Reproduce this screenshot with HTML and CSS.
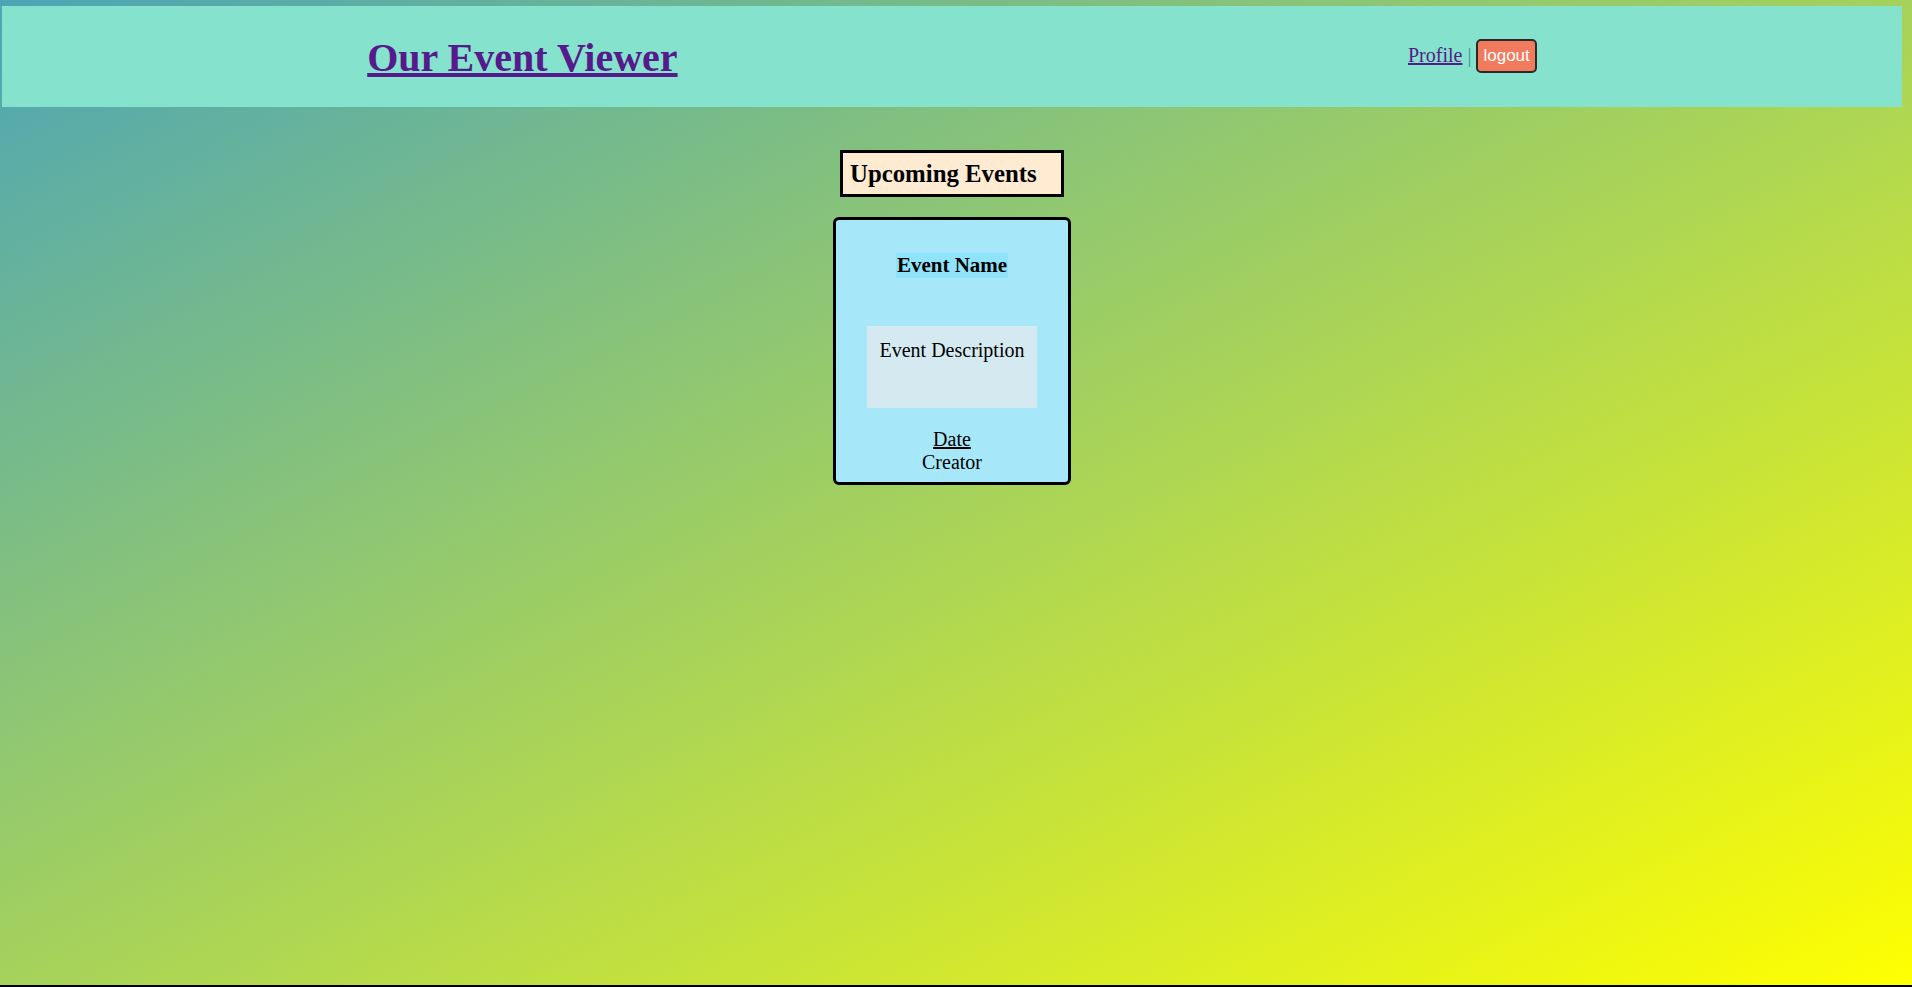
FILE: index.html
```html
<!DOCTYPE html>
<html lang="en">
<head>
<meta charset="utf-8">
<title>Our Event Viewer</title>
<link rel="stylesheet" href="styles.css">
</head>
<body>
  <header class="site-header">
    <h1 class="site-title"><a href="#" class="title-link">Our Event Viewer</a></h1>
    <nav class="user-nav"><a href="#" class="nav-link">Profile</a> <span class="sep">|</span> <button class="logout-btn">logout</button></nav>
  </header>
  <main class="content">
    <h2 class="section-title">Upcoming Events</h2>
    <div class="event-card">
      <h3 class="event-name">Event Name</h3>
      <p class="event-desc">Event Description</p>
      <div class="event-meta">
        <a href="#" class="event-date">Date</a>
        <div class="event-creator">Creator</div>
      </div>
    </div>
  </main>
</body>
</html>
```

FILE: styles.css
```css
html {
  background: #000;
}
body {
  margin: 0;
  height: 985px;
  box-sizing: border-box;
  padding: 6px 10px 0 2px;
  background: linear-gradient(to bottom right, #4ca5b6, #ffff00);
  font-family: "Liberation Serif", "Times New Roman", serif;
  color: #000;
}
.site-header {
  height: 101px;
  background: #85e2cc;
  display: flex;
  justify-content: space-around;
  align-items: center;
}
.site-title {
  margin: 1px 0 0 0;
  font-size: 40px;
  font-weight: bold;
  line-height: normal;
}
.title-link {
  color: #551a8b;
}
.user-nav {
  font-size: 20px;
  line-height: 34px;
  margin-top: -2px;
}
.nav-link {
  color: #551a8b;
}
.sep {
  color: #3e8f9c;
}
.logout-btn {
  font-family: "Liberation Sans", Arial, sans-serif;
  font-size: 17px;
  line-height: 18px;
  color: #fff;
  background: #f27a5d;
  border: 2px solid #2a2a2a;
  border-radius: 5px;
  padding: 6px 5px;
  margin: 0;
  vertical-align: 1px;
  cursor: pointer;
}
.content {
  display: flex;
  flex-direction: column;
  align-items: center;
}
.section-title {
  margin: 43px 0 0 0;
  box-sizing: border-box;
  width: 224px;
  height: 47px;
  padding: 7px 7px 0;
  border: 3px solid #000;
  background: #ffebd2;
  font-size: 24.8px;
  line-height: normal;
}
.event-card {
  margin-top: 20px;
  box-sizing: border-box;
  width: 238px;
  border: 3px solid #000;
  border-radius: 6px;
  background: #a6e8fa;
  padding: 33px 0 8px;
  display: flex;
  flex-direction: column;
  align-items: center;
  text-align: center;
}
.event-name {
  margin: 0;
  font-size: 21px;
  line-height: 25px;
  background: #8fe3fb;
  padding: 0 1px;
}
.event-desc {
  margin: 48px 0 0;
  box-sizing: border-box;
  width: 170px;
  height: 82px;
  padding-top: 13px;
  background: #d5eaf0;
  font-size: 20px;
  line-height: 23px;
}
.event-meta {
  margin-top: 20px;
  font-size: 20px;
  line-height: 23px;
}
.event-date {
  color: #000;
}
```
